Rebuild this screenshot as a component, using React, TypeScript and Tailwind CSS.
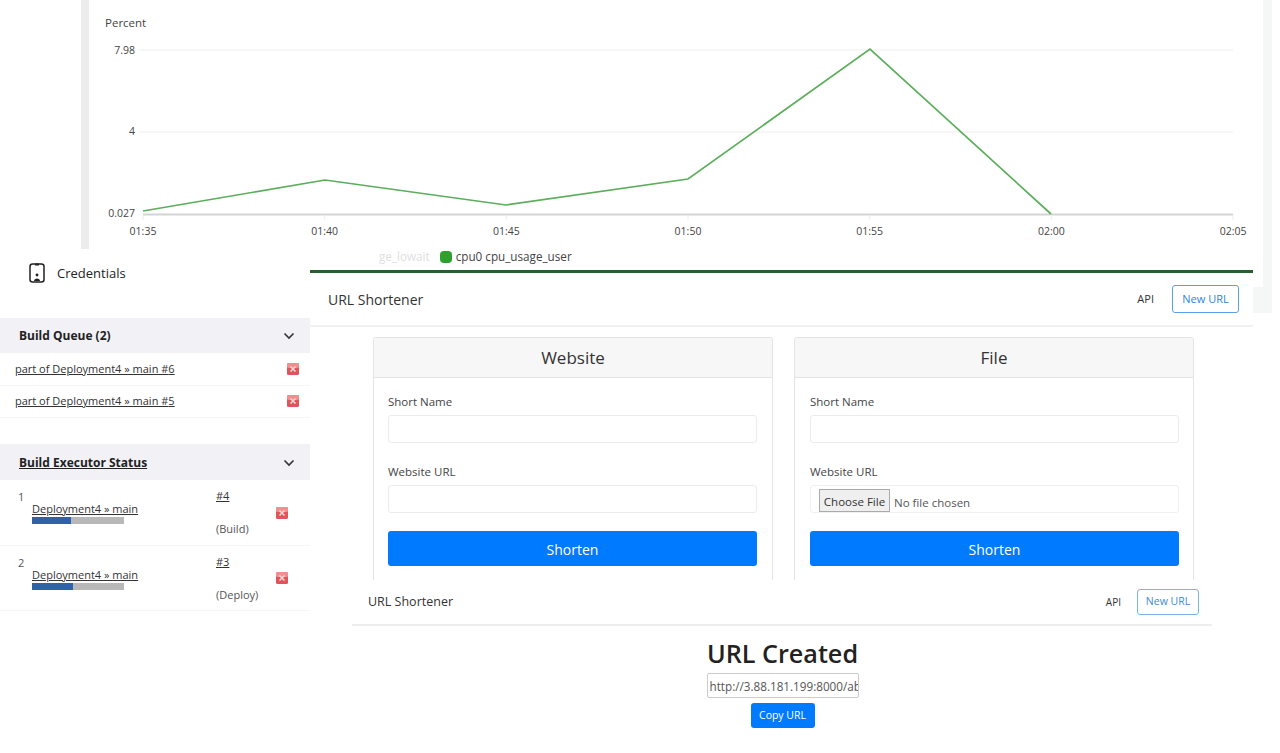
const sans = "font-['Open_Sans','Noto_Sans',sans-serif]";

const ticks = ["01:35", "01:40", "01:45", "01:50", "01:55", "02:00", "02:05"];

function Chart() {
  return (
    <svg width="1280" height="250" className="block">
      <rect x="81" y="0" width="8" height="249" fill="#ececec" />
      <rect x="1263" y="0" width="9" height="250" fill="#f5f6f6" />
      <text x="105" y="27" fontSize="11.5" fill="#444">Percent</text>
      <line x1="139" y1="50" x2="1233" y2="50" stroke="#eeeeee" />
      <line x1="139" y1="132" x2="1233" y2="132" stroke="#eeeeee" />
      <line x1="143" y1="214.5" x2="1233" y2="214.5" stroke="#d4d4d4" strokeWidth="2" />
      <text x="135" y="54" fontSize="10.5" textAnchor="end" fill="#444">7.98</text>
      <text x="135" y="135" fontSize="10.5" textAnchor="end" fill="#444">4</text>
      <text x="135" y="217" fontSize="10.5" textAnchor="end" fill="#444">0.027</text>
      {ticks.map((t, i) => (
        <g key={t}>
          <line x1={143 + i * 181.67} y1="215" x2={143 + i * 181.67} y2="220" stroke="#eeeeee" />
          <text x={143 + i * 181.67} y="235" fontSize="10.5" textAnchor="middle" fill="#444">{t}</text>
        </g>
      ))}
      <polyline
        points="143,211 325,180 506,205 688,179 870,49 1051,214"
        fill="none"
        stroke="#5cae5c"
        strokeWidth="1.7"
      />
    </svg>
  );
}

function CloseIcon() {
  return (
    <svg width="12" height="12" viewBox="0 0 12 12">
      <rect width="12" height="12" rx="1.5" fill="#e2545c" />
      <rect width="12" height="5" rx="1.5" fill="#ef8f92" />
      <path d="M3.5 3.5l5 5M8.5 3.5l-5 5" stroke="#f8d7d7" strokeWidth="1.5" />
    </svg>
  );
}

function Chevron() {
  return (
    <svg width="12" height="8" viewBox="0 0 12 8" fill="none" stroke="#333" strokeWidth="1.6">
      <path d="M1.5 1.5 6 6l4.5-4.5" />
    </svg>
  );
}

function QueueRow({ n }: { n: number }) {
  return (
    <div className="flex h-[32.5px] items-center justify-between border-b border-[#f6f6f6] pl-[15px] pr-[11px]">
      <a className="text-[11px] text-[#333] underline">part of Deployment4 » main #{n}</a>
      <CloseIcon />
    </div>
  );
}

function ExecutorRow({ n, build, stage, pct }: { n: number; build: string; stage: string; pct: number }) {
  return (
    <div className="flex h-[65.5px] border-b border-[#f6f6f6] pl-[18px]">
      <div className="w-[198px] pt-[9px]">
        <div className="h-[15px] text-[11px] leading-[15px] text-[#555]">{n}</div>
        <div className="-mt-[3px] pl-[14px]">
          <a className="block text-[11px] leading-[15px] text-[#333] underline">Deployment4 » main</a>
          <div className="mt-[1px] h-[7px] w-[92px] bg-[#b8b8b8]">
            <div className="h-full bg-[#2f62a6]" style={{ width: `${pct}%` }} />
          </div>
        </div>
      </div>
      <div className="flex w-[60px] flex-col justify-between pt-[8px] pb-[7px] text-[11px] text-[#555]">
        <a className="text-[#333] underline">{build}</a>
        <span>{stage}</span>
      </div>
      <div className="flex items-center pt-[1px]">
        <CloseIcon />
      </div>
    </div>
  );
}

function Sidebar() {
  return (
    <div className="w-[310px] bg-white">
      <div className="flex h-[68px] items-start gap-[12px] pl-[29px] pt-[13px]">
        <svg width="16" height="20" viewBox="0 0 16 20" fill="none" stroke="#222" strokeWidth="1.5">
          <rect x="1" y="1" width="14" height="18" rx="2.5" />
          <path d="M6 1.5h4" strokeWidth="2" />
          <circle cx="8" cy="12" r="1.4" fill="#222" stroke="none" />
          <path d="M5 18c0-3.4 6-3.4 6 0z" fill="#222" stroke="none" />
        </svg>
        <span className="text-[13px] leading-[20px] text-[#222]">Credentials</span>
      </div>
      <div className="flex h-[35px] items-center justify-between bg-[#f1f1f6] pl-[19px] pr-[15px]">
        <span className="text-[12px] font-bold text-[#222]">Build Queue (2)</span>
        <Chevron />
      </div>
      <QueueRow n={6} />
      <QueueRow n={5} />
      <div className="mt-[26px] flex h-[36px] items-center justify-between bg-[#f1f1f6] pl-[19px] pr-[15px] pt-[1px]">
        <span className="text-[12px] font-bold text-[#222] underline">Build Executor Status</span>
        <Chevron />
      </div>
      <ExecutorRow n={1} build="#4" stage="(Build)" pct={42} />
      <ExecutorRow n={2} build="#3" stage="(Deploy)" pct={45} />
    </div>
  );
}

function Nav({ small }: { small?: boolean }) {
  return (
    <div className={small ? "flex h-[45px] items-center justify-between border-b-2 border-[#eeeeee] pb-[1px] pl-[16px] pr-[13px]" : "flex h-[54px] items-center justify-between border-b-2 border-[#f1f1f1] pl-[18px] pr-[14px]"}>
      <span className={small ? "text-[12.5px] text-[#333]" : "text-[14px] text-[#333]"}>URL Shortener</span>
      <div className={small ? "flex items-center gap-[16px]" : "flex items-center gap-[18px]"}>
        <span className={small ? "text-[10px] text-[#333]" : "text-[11px] text-[#333]"}>API</span>
        <span className={small ? "flex h-[26px] w-[62px] items-center justify-center rounded-[3px] border border-[#7fb5ee] text-[10.5px] text-[#3b8be0]" : "flex h-[28px] w-[67px] items-center justify-center rounded-[3px] border border-[#5a9fe8] text-[11px] text-[#2f86e0]"}>New URL</span>
      </div>
    </div>
  );
}

function Card({ title, file }: { title: string; file?: boolean }) {
  return (
    <div className="h-[243px] w-[400px] rounded-t-[3px] border-x border-t border-[#e4e4e4]">
      <div className="flex h-[40px] items-center justify-center border-b border-[#e4e4e4] bg-[#f7f7f7] text-[17px] text-[#333]">
        {title}
      </div>
      <div className={file ? "pl-[15px] pr-[14px] pt-[15px]" : "pl-[14px] pr-[15px] pt-[15px]"}>
        <div className="h-[16px] pt-[1px] text-[11.5px] leading-[16px] text-[#444]">Short Name</div>
        <div className="mt-[6px] h-[28px] rounded-[3px] border border-[#ececec]" />
        <div className="mt-[20px] h-[16px] pt-[1px] text-[11.5px] leading-[16px] text-[#444]">Website URL</div>
        {file ? (
          <div className="mt-[6px] flex h-[28px] items-end rounded-[3px] border border-[#f0f0f0] pl-[8px]">
            <span className="flex h-[23px] w-[71px] items-center justify-center border border-[#aaaaaa] bg-[#efefef] pt-[2px] text-[11.5px] text-[#333]">Choose File</span>
            <span className="mb-[1px] ml-[4px] text-[11.5px] text-[#555]">No file chosen</span>
          </div>
        ) : (
          <div className="mt-[6px] h-[28px] rounded-[3px] border border-[#ececec]" />
        )}
        <div className="mt-[18px] flex h-[35px] items-center justify-center rounded-[3px] bg-[#007bff] pt-[1px] text-[14px] text-white">
          Shorten
        </div>
      </div>
    </div>
  );
}

function Shortener() {
  return (
    <div className="w-[943px] bg-white">
      <div className="h-[3px] bg-[#2a5e2e]" />
      <Nav />
      <div className="flex gap-[21px] pl-[63px] pt-[10px]">
        <Card title="Website" />
        <Card title="File" file />
      </div>
    </div>
  );
}

function Created() {
  return (
    <div className="h-[172px] w-[860px] bg-white">
      <Nav small />
      <div className="flex flex-col items-center pl-[1px] pt-[8px]">
        <h1 className="text-[25.2px] leading-[38px] font-semibold text-[#222]">URL Created</h1>
        <input
          readOnly
          value="http://3.88.181.199:8000/abc123"
          className="mt-[1px] h-[25px] w-[152px] rounded-[2px] border border-[#cccccc] pl-[2px] text-[11.7px] text-[#555]"
        />
        <div className="mt-[5px] flex h-[25px] w-[64px] items-center justify-center rounded-[3px] bg-[#007bff] text-[10.5px] text-white">
          Copy URL
        </div>
      </div>
    </div>
  );
}

export default function App() {
  return (
    <div className={`relative h-[753px] w-[1280px] overflow-hidden bg-white ${sans}`}>
      <Chart />
      {/* collage: each screenshot piece sits where it was pasted */}
      <div className="absolute top-[248px] left-[379px] flex items-center text-[11.7px]">
        <span className="text-[#e0e0e0]">ge_lowait</span>
        <span className="mr-[4px] ml-[10px] h-[12px] w-[12px] rounded-[4px] bg-[#2ea02e]" />
        <span className="text-[#444]">cpu0 cpu_usage_user</span>
      </div>
      <div className="absolute top-[250px] left-[1263px] h-[37px] w-[9px] bg-[#f5f6f6]" />
      <div className="absolute top-[287px] left-[1253px] h-[26px] w-[19px] bg-[#f5f6f6]" />
      <div className="absolute top-[270px] left-[310px]">
        <Shortener />
      </div>
      <div className="absolute top-[250px] left-0">
        <Sidebar />
      </div>
      <div className="absolute top-[581px] left-[352px]">
        <Created />
      </div>
    </div>
  );
}
